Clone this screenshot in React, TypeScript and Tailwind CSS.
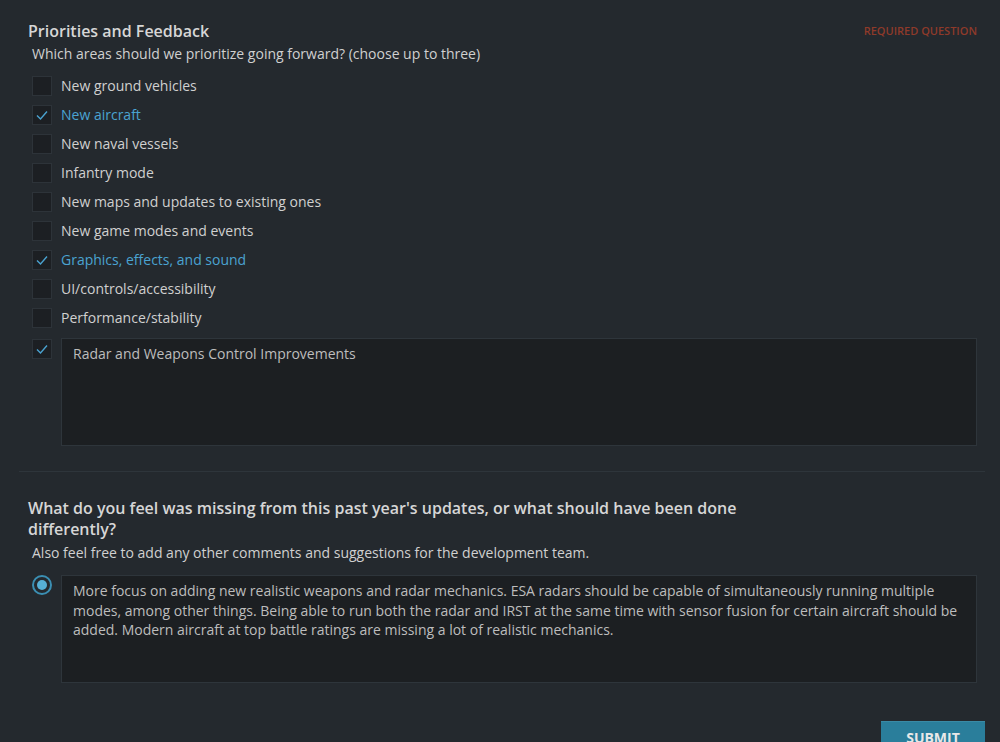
import React from "react";

const options: { label: string; checked: boolean }[] = [
  { label: "New ground vehicles", checked: false },
  { label: "New aircraft", checked: true },
  { label: "New naval vessels", checked: false },
  { label: "Infantry mode", checked: false },
  { label: "New maps and updates to existing ones", checked: false },
  { label: "New game modes and events", checked: false },
  { label: "Graphics, effects, and sound", checked: true },
  { label: "UI/controls/accessibility", checked: false },
  { label: "Performance/stability", checked: false },
];

function Box({ checked }: { checked: boolean }) {
  return (
    <div className="w-[20px] h-[20px] shrink-0 bg-[#1c1f23] border border-[#2d3339] flex items-center justify-center">
      {checked && (
        <svg width="14" height="14" viewBox="0 0 14 14" fill="none">
          <path d="M2 7.5 L5.5 11 L12 3.5" stroke="#4aa3d1" strokeWidth="1.4" />
        </svg>
      )}
    </div>
  );
}

export default function App() {
  return (
    <div
      className="w-[1000px] h-[742px] overflow-hidden bg-[#24292e] text-[#d4d4d4]"
      style={{ fontFamily: '"Open Sans", "Noto Sans", sans-serif' }}
    >
      <div className="pl-[19px] pr-[15px] pt-[20px]">
        {/* Section 1 */}
        <div className="pl-[9px] pr-[8px]">
          <div className="flex justify-between items-start">
            <h2 className="text-[16px] font-semibold leading-[22px] text-[#d6d6d6]">Priorities and Feedback</h2>
            <span className="text-[11px] font-semibold leading-[22px] text-[#8f3a2a] uppercase">Required question</span>
          </div>
          <p className="pl-[4px] text-[14px] leading-[24px] text-[#d0d0d0]">
            Which areas should we prioritize going forward? (choose up to three)
          </p>
          <div className="pl-[4px] mt-[10px] flex flex-col gap-[9px]">
            {options.map((o) => (
              <div key={o.label} className="flex items-center gap-[9px] h-[20px]">
                <Box checked={o.checked} />
                <span className={`text-[14px] leading-[20px] ${o.checked ? "text-[#4aa3d1]" : "text-[#d0d0d0]"}`}>
                  {o.label}
                </span>
              </div>
            ))}
            <div className="flex items-start gap-[9px] mt-[1px]">
              <div className="mt-[1px]">
                <Box checked={true} />
              </div>
              <div className="flex-1 h-[108px] bg-[#1c1f22] border border-[#2e353b] px-[11px] py-[5px] text-[14px] leading-[19.5px] text-[#bdbdbd]">
                Radar and Weapons Control Improvements
              </div>
            </div>
          </div>
        </div>

        <div className="mt-[25px] border-t border-[#2e353b]" />

        {/* Section 2 */}
        <div className="pl-[9px] pr-[8px] pt-[26px]">
          <h2 className="text-[16px] font-semibold leading-[21px] text-[#d6d6d6] max-w-[740px]">
            What do you feel was missing from this past year's updates, or what should have been done differently?
          </h2>
          <p className="pl-[4px] mt-[1px] text-[14px] leading-[24px] text-[#d0d0d0]">
            Also feel free to add any other comments and suggestions for the development team.
          </p>
          <div className="pl-[4px] mt-[10px] flex items-start gap-[9px]">
            <div className="w-[20px] h-[20px] shrink-0 rounded-full border-2 border-[#3b8fb3] flex items-center justify-center">
              <div className="w-[10px] h-[10px] rounded-full bg-[#56b0d6]" />
            </div>
            <div className="flex-1 h-[108px] bg-[#1c1f22] border border-[#2e353b] px-[11px] py-[5px] text-[14px] leading-[19.5px] text-[#bdbdbd]">
              More focus on adding new realistic weapons and radar mechanics. ESA radars should be capable of simultaneously running multiple modes, among other things. Being able to run both the radar and IRST at the same time with sensor fusion for certain aircraft should be added. Modern aircraft at top battle ratings are missing a lot of realistic mechanics.
            </div>
          </div>
        </div>

        <div className="flex justify-end mt-[38px]">
          <button className="w-[104px] h-[40px] bg-[#2a7e9b] border-t border-[#3a8aa5] text-[#e8e8e8] text-[14px] font-bold pt-[6px] leading-[20px] flex justify-center items-start uppercase">
            Submit
          </button>
        </div>
      </div>
    </div>
  );
}
